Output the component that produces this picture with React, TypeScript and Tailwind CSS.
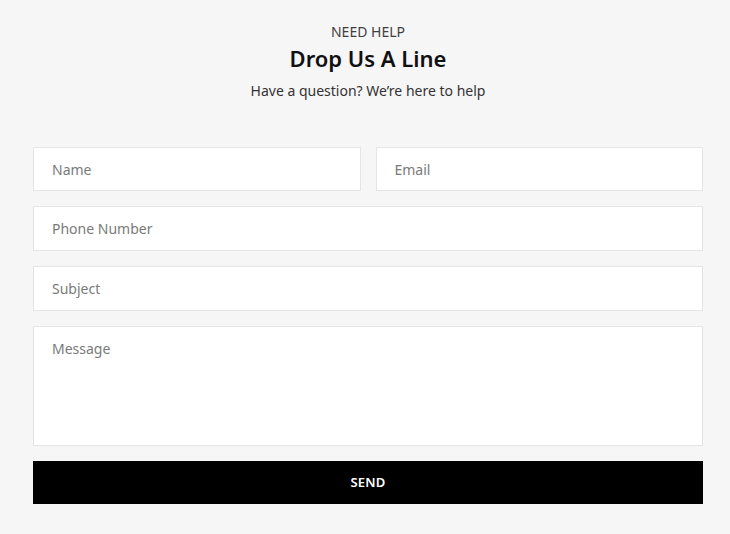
import React from 'react';

const field =
    'w-full bg-white border border-[#e6e5e6] px-[18px] text-[14px] text-[#333] placeholder:text-[#7a7a7a] outline-none';

const App: React.FC = () => {
    return (
        <div className="min-h-[534px] bg-[#f7f6f7] pl-[33px] pr-[27px] pt-[22px] pb-[30px] font-['Noto_Sans',sans-serif]">
            <div className="flex flex-col items-center text-center">
                <div className="text-[14px] leading-[20px] text-[#3f3f3f] uppercase">Need Help</div>
                <h1 className="mt-[1px] text-[22px] leading-[30px] font-semibold text-[#111]">Drop Us A Line</h1>
                <p className="mt-[8px] text-[14px] leading-[20px] text-[#333]">Have a question? We’re here to help</p>
            </div>

            <form className="mt-[46px] flex flex-col gap-[15px]" onSubmit={e => e.preventDefault()}>
                <div className="grid grid-cols-2 gap-[15px]">
                    <input className={`${field} h-[44px]`} placeholder="Name"/>
                    <input className={`${field} h-[44px]`} placeholder="Email"/>
                </div>
                <input className={`${field} h-[45px]`} placeholder="Phone Number"/>
                <input className={`${field} h-[45px]`} placeholder="Subject"/>
                <textarea
                    className="w-full h-[120px] resize-none bg-white border border-[#e6e5e6] px-[18px] pt-[11px] text-[14px] text-[#333] placeholder:text-[#7a7a7a] outline-none"
                    placeholder="Message"
                />
                <button
                    type="submit"
                    className="h-[43px] w-full bg-black text-white text-[13px] font-semibold uppercase tracking-[0.2px]"
                >
                    Send
                </button>
            </form>
        </div>
    );
};

export default App;
